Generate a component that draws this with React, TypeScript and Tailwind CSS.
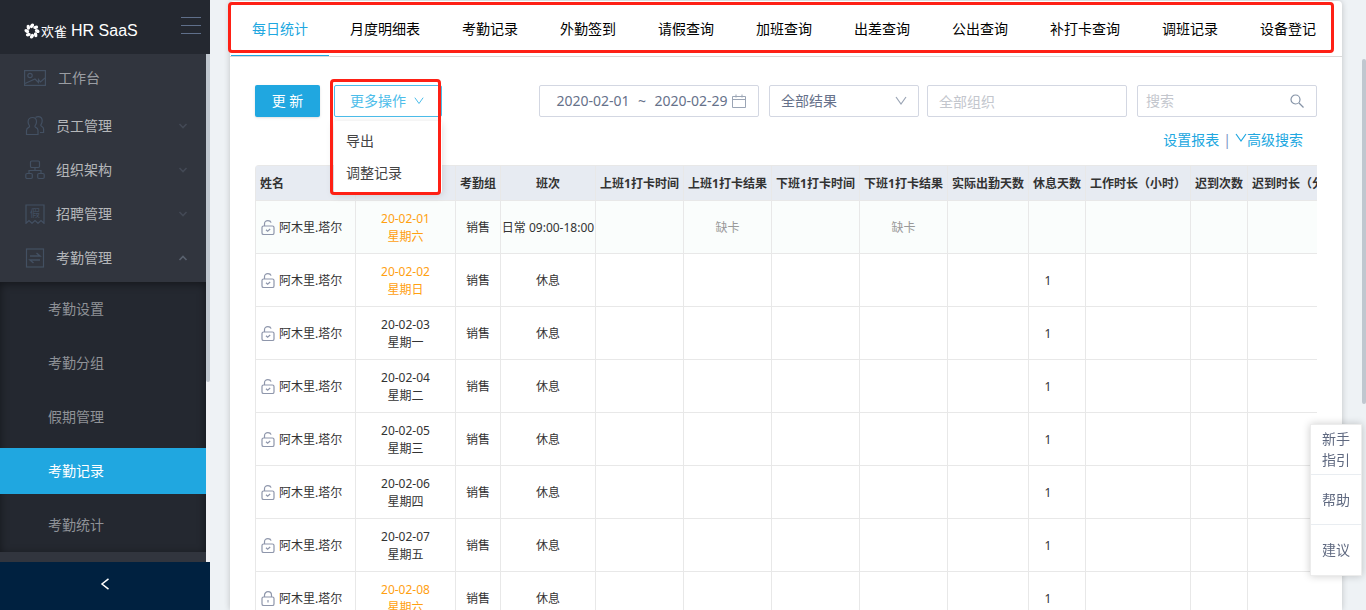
import React, { useState } from 'react';

const TABS = [
  '每日统计', '月度明细表', '考勤记录', '外勤签到', '请假查询', '加班查询',
  '出差查询', '公出查询', '补打卡查询', '调班记录', '设备登记',
];

const SUB_MENU = ['考勤设置', '考勤分组', '假期管理', '考勤记录', '考勤统计'];

const COLUMNS = [
  { title: '姓名', width: 'w-[100px]' },
  { title: '', width: 'w-[100px]' },
  { title: '考勤组', width: 'w-[45px]' },
  { title: '班次', width: 'w-[95px]' },
  { title: '上班1打卡时间', width: 'w-[88px]' },
  { title: '上班1打卡结果', width: 'w-[88px]' },
  { title: '下班1打卡时间', width: 'w-[88px]' },
  { title: '下班1打卡结果', width: 'w-[88px]' },
  { title: '实际出勤天数', width: 'w-[81px]' },
  { title: '休息天数', width: 'w-[57px]' },
  { title: '工作时长（小时）', width: 'w-[105px]' },
  { title: '迟到次数', width: 'w-[57px]' },
  { title: '迟到时长（分钟）', width: 'w-[105px]' },
];

interface DayRecord {
  date: string;
  week: string;
  weekend?: boolean;
  locked?: boolean;
  shift: string;
  result?: string;
  rest?: number;
}

const RECORDS: DayRecord[] = [
  { date: '20-02-01', week: '星期六', weekend: true, shift: '日常 09:00-18:00', result: '缺卡' },
  { date: '20-02-02', week: '星期日', weekend: true, shift: '休息', rest: 1 },
  { date: '20-02-03', week: '星期一', shift: '休息', rest: 1 },
  { date: '20-02-04', week: '星期二', shift: '休息', rest: 1 },
  { date: '20-02-05', week: '星期三', shift: '休息', rest: 1 },
  { date: '20-02-06', week: '星期四', shift: '休息', rest: 1 },
  { date: '20-02-07', week: '星期五', shift: '休息', rest: 1 },
  { date: '20-02-08', week: '星期六', weekend: true, locked: true, shift: '休息', rest: 1 },
];

function Chevron({ className }: { className: string }) {
  return (
    <svg viewBox="0 0 12 12" className={className} fill="none" stroke="currentColor" strokeWidth="1.2">
      <path d="M1 2l5 7 5-7" />
    </svg>
  );
}

function LockIcon({ locked }: { locked?: boolean }) {
  return (
    <svg viewBox="0 0 14 16" className="h-4 w-3.5 shrink-0 text-[#8e96ab]" fill="none" stroke="currentColor" strokeWidth="1.2">
      <rect x="1" y="6" width="12" height="8.500" rx="1.6" />
      {locked ? (
        <>
          <path d="M3.500 6V4.200a3.500 3.500 0 0 1 7 0V6" />
          <path d="M7 9v2.500" />
        </>
      ) : (
        <>
          <path d="M3.500 6V3.700c0-2 1.500-3.100 3.400-3.100 1.600 0 2.800.7 3.200 2" />
          <path d="M5 9.800l1.600 1.500L9.200 9" />
        </>
      )}
    </svg>
  );
}

function Logo() {
  return (
    <svg viewBox="0 0 16 16" className="h-4 w-4 shrink-0" fill="#fff">
      {[0, 45, 90, 135, 180, 225, 270, 315].map((deg) => (
        <ellipse key={deg} cx="8" cy="2.800" rx="1.7" ry="2.500" transform={`rotate(${deg} 8 8) rotate(35 8 2.800)`} />
      ))}
    </svg>
  );
}

const iconProps = {
  fill: 'none',
  stroke: 'currentColor',
  strokeWidth: 1.2,
  className: 'h-5 w-5 text-[#435062]',
  viewBox: '0 0 20 20',
};

const MENU = [
  {
    title: '员工管理',
    icon: (
      <svg {...iconProps}>
        <path d="M7.500 1.500c2.400 0 4 1.800 4 4.300 0 1.500-.6 2.800-1.300 3.700-.5.8-.2 1.500.6 1.900 1.400.7 2.200 1.600 2.200 3.100V18.500H1.500v-4c0-1.500.8-2.400 2.200-3.100.8-.4 1.100-1.100.6-1.900C3.600 8.600 3.100 7.300 3.100 5.800c0-2.500 2-4.300 4.400-4.300z" />
        <path d="M10.500 1.500c.7-.5 1.600-.9 2.700-.9 2.500 0 4 1.800 4 4.200 0 1.500-.5 2.700-1.100 3.600-.5.8-.2 1.400.5 1.800 1.300.7 2 1.600 2 2.900v3.400h-3.600" />
      </svg>
    ),
  },
  {
    title: '组织架构',
    icon: (
      <svg {...iconProps}>
        <rect x="5.500" y="1" width="9" height="6.500" rx="1.2" />
        <rect x=".8" y="13.500" width="6.500" height="5" rx="1.2" />
        <rect x="12.700" y="13.500" width="6.500" height="5" rx="1.2" />
        <path d="M10 7.500v3M4 13.500v-3h12v3" />
      </svg>
    ),
  },
  {
    title: '招聘管理',
    icon: (
      <svg {...iconProps}>
        <path d="M1 19.300V1h18v18.300l-3-2.800-3 2.800-3-2.800-3 2.800-3-2.800z" />
        <text x="10" y="13" textAnchor="middle" fontSize="10" fill="currentColor" stroke="none">假</text>
      </svg>
    ),
  },
  {
    title: '考勤管理',
    open: true,
    icon: (
      <svg {...iconProps}>
        <rect x="1.500" y="1" width="17" height="18" />
        <path d="M5 8h10l-3.500-3M15 12H5l3.500 3" strokeWidth="1.4" />
      </svg>
    ),
  },
];

function Sidebar() {
  return (
    <aside className="flex w-[210px] shrink-0 flex-col bg-[#31353e]">
      <div className="flex h-[54px] shrink-0 items-center bg-[#242830] pt-2 pr-[9px] pl-6 text-white">
        <Logo />
        <span className="ml-px text-[13px] leading-none">欢雀</span>
        <span className="ml-1 font-['Liberation_Sans',sans-serif] text-base leading-none whitespace-nowrap">HR SaaS</span>
        <button aria-label="菜单" className="mb-3 ml-auto text-[#5f6f8a]">
          <svg viewBox="0 0 20 18" className="h-[18px] w-5" stroke="currentColor">
            <path d="M0 1.500h20M0 9.500h20M0 17.500h20" />
          </svg>
        </button>
      </div>

      <div className="flex min-h-0 flex-1">
        <nav className="flex-1 overflow-hidden text-sm">
          <a href="#home" className="mb-0.5 flex h-12 items-center pl-6 text-[#9a9da2]">
            <svg viewBox="0 0 22 16" className="h-4 w-[22px] text-[#435062]" fill="none" stroke="currentColor" strokeWidth="1.2">
              <rect x=".6" y=".6" width="20.800" height="14.800" />
              <circle cx="6" cy="5.500" r="2.200" />
              <path d="M1 13.500l10-4.500 3.500 3.500v-3l2 2.500L21 8" />
            </svg>
            <span className="ml-3">工作台</span>
          </a>
          {MENU.map((item) => (
            <button key={item.title} className="flex h-11 w-full items-center pr-[18px] pl-[25px] text-[#b5b7ba]">
              {item.icon}
              <span className="ml-[11px]">{item.title}</span>
              <svg
                viewBox="0 0 10 8"
                className={`ml-auto h-2 w-[10px] ${item.open ? 'text-[#59616e]' : 'text-[#434955]'}`}
                fill="none"
                stroke="currentColor"
                strokeWidth="1.6"
              >
                <path d={item.open ? 'M1.500 6 5 2.500 8.500 6' : 'M1.500 2 5 5.500 8.500 2'} />
              </svg>
            </button>
          ))}
          <ul className="mt-0.5 space-y-2 bg-[#242830] pt-1 pb-1 shadow-[inset_0_2px_8px_rgba(0,0,0,0.45)]">
            {SUB_MENU.map((title) => (
              <li key={title}>
                <a
                  href={`#${title}`}
                  className={`flex h-[46px] items-center pl-12 ${title === '考勤记录' ? 'bg-[#20a7e0] text-white' : 'text-[#8f9297]'}`}
                >
                  {title}
                </a>
              </li>
            ))}
          </ul>
        </nav>
        <div className="w-1 bg-[#f1f2f5]">
          <div className="h-[328px] rounded-b-sm bg-[#c0c7cf]" />
        </div>
      </div>

      <button aria-label="收起" className="flex h-12 shrink-0 items-center justify-center bg-[#002140] pb-1 text-white">
        <svg viewBox="0 0 10 12" className="h-3 w-[10px]" fill="none" stroke="currentColor" strokeWidth="1.5">
          <path d="M8.500.8 2 6l6.500 5.200" />
        </svg>
      </button>
    </aside>
  );
}

function Toolbar() {
  const [menuOpen, setMenuOpen] = useState(true);

  return (
    <div className="flex h-8 items-center text-sm">
      <button className="h-8 w-[65px] rounded-xs bg-[#20a7e0] text-white shadow-sm">更 新</button>
      <div className="relative ml-[14px]">
        <button
          onClick={() => setMenuOpen(!menuOpen)}
          className="flex h-8 w-[108px] items-center rounded-xs border border-[#4cbdea] pl-[15px] text-[#4cbdea]"
        >
          更多操作
          <Chevron className="ml-2 h-[10px] w-[10px]" />
        </button>
        {menuOpen && (
          <ul className="absolute top-9 left-0 z-10 w-[108px] rounded-xs bg-white py-1 text-[#444] shadow-[0_2px_8px_rgba(0,0,0,0.15)]">
            <li><button className="h-8 px-3">导出</button></li>
            <li><button className="h-8 px-3">调整记录</button></li>
          </ul>
        )}
        {/* highlight frame */}
        <div className="pointer-events-none absolute -top-1.5 -left-1 z-20 h-[116px] w-[111px] rounded-sm border-3 border-[#fe2015]" />
      </div>

      <div className="ml-auto flex items-center text-[#66718a]">
        <div className="flex h-8 w-[220px] items-center rounded-xs border border-[#d3d7e2] px-3">
          <input aria-label="开始日期" defaultValue="2020-02-01" className="w-[82px] text-center outline-none" />
          <span className="w-4 text-center">~</span>
          <input aria-label="结束日期" defaultValue="2020-02-29" className="w-[82px] text-center outline-none" />
          <svg viewBox="0 0 14 14" className="h-[14px] w-[14px] shrink-0 text-[#9ba5b5]" fill="none" stroke="currentColor">
            <path d="M.5 2.500h13v11H.5zM.5 5.500h13M4 .5v3M10 .5v3" />
          </svg>
        </div>
        <div className="relative ml-[10px]">
          <select aria-label="考勤结果" className="h-8 w-[150px] appearance-none rounded-xs border border-[#d3d7e2] bg-white pl-[11px] outline-none">
            <option>全部结果</option>
          </select>
          <Chevron className="pointer-events-none absolute top-[10px] right-3 h-3 w-3 text-[#9ba5b5]" />
        </div>
        <input aria-label="组织" placeholder="全部组织" className="ml-2 h-8 w-[200px] rounded-xs border border-[#d3d7e2] px-[11px] outline-none placeholder:text-[#c3c6cd]" />
        <div className="ml-[10px] flex h-8 w-[180px] items-center rounded-xs border border-[#d3d7e2] px-2">
          <input aria-label="搜索" placeholder="搜索" className="w-full min-w-0 outline-none placeholder:text-[#c3c6cd]" />
          <svg viewBox="0 0 14 14" className="mr-1 h-[14px] w-[14px] shrink-0 text-[#8492a6]" fill="none" stroke="currentColor" strokeWidth="1.2">
            <circle cx="5.500" cy="5.500" r="4.500" />
            <path d="m9 9 4.500 4.500" />
          </svg>
        </div>
      </div>
    </div>
  );
}

function RecordTable() {
  return (
    <div className="overflow-x-hidden rounded-tl-sm">
      <table className="w-[1098px] table-fixed border-separate border-spacing-0 border-t border-l border-[#e8e8e8] text-xs leading-[18px] whitespace-nowrap text-[#333]">
        <thead>
          <tr className="h-[35px] bg-[#e7ebf2]">
            {COLUMNS.map((col, i) => (
              <th
                key={col.title}
                className={`${col.width} border-r border-b border-[#e8e8e8] px-1 pt-0.5 font-bold ${i === 0 ? 'text-left' : ''}`}
              >
                {col.title}
              </th>
            ))}
          </tr>
        </thead>
        <tbody>
          {RECORDS.map((rec, i) => {
            const cells = [
              '销售', rec.shift, '', rec.result, '', rec.result, '', rec.rest, '', '', '',
            ];
            return (
              <tr key={rec.date} className={`h-[53px] ${i === 0 ? 'bg-[#fafdfc]' : 'bg-white'}`}>
                <td className="border-r border-b border-[#e8e8e8] pt-0.5 pl-[5px]">
                  <div className="flex items-center gap-1">
                    <LockIcon locked={rec.locked} />
                    <span>阿木里.塔尔</span>
                  </div>
                </td>
                <td className={`border-r border-b border-[#e8e8e8] pt-0.5 text-center ${rec.weekend ? 'text-[#ffa011]' : ''}`}>
                  <div>{rec.date}</div>
                  <div>{rec.week}</div>
                </td>
                {cells.map((cell, j) => (
                  <td
                    key={j}
                    className={`border-r border-b border-[#e8e8e8] pt-0.5 text-center ${cell === '缺卡' ? 'text-[#999]' : ''} ${j === 7 ? 'pr-[18px]' : ''}`}
                  >
                    {cell}
                  </td>
                ))}
              </tr>
            );
          })}
        </tbody>
      </table>
    </div>
  );
}

export default function App() {
  return (
    <div className="flex h-screen overflow-hidden bg-[#eef2f5] font-['Noto_Sans','Noto_Sans_CJK_SC',sans-serif]">
      <Sidebar />

      <main className="flex min-w-0 flex-1 pl-5">
        <div className="relative mt-px min-w-0 flex-1 rounded-t-sm bg-white shadow-[0_0_6px_rgba(0,0,0,0.2)]">
          <nav className="flex h-14 border-b border-[#d9d9d9] px-px text-sm text-black">
            {TABS.map((tab, i) => (
              <a
                key={tab}
                href={`#${tab}`}
                className={`flex items-center border-b px-[21px] pt-0.5 whitespace-nowrap ${i === 0 ? 'border-[#20a7e0] text-[#20a7e0]' : 'border-transparent'}`}
              >
                {tab}
              </a>
            ))}
          </nav>
          <div className="pointer-events-none absolute top-px right-2 -left-0.5 h-[51px] rounded-sm border-3 border-[#fe2015]" />

          <div className="px-[25px] pt-7">
            <Toolbar />
            <div className="flex h-12 items-center justify-end pr-[14px] pb-0.5 text-sm text-[#20a7e0]">
              <a href="#report">设置报表</a>
              <span className="mx-1 text-[#7b93c4]">|</span>
              <a href="#advanced" className="flex items-center">
                <Chevron className="mb-1 h-3 w-3" />
                高级搜索
              </a>
            </div>
            <RecordTable />
          </div>
        </div>

        <div className="w-6 shrink-0 pt-[59px]">
          <div className="ml-auto h-[345px] w-1 rounded-full bg-[#c0c7cf]" />
        </div>
      </main>

      <div className="fixed right-1 bottom-[34px] z-30 w-[52px] divide-y divide-[#e9edf1] border border-[#ececec] bg-white text-sm leading-[21px] text-[#5f6980] shadow-[0_0_8px_rgba(0,0,0,0.2)]">
        <button className="block h-[50px] w-full px-2.5 pb-0.5">新手指引</button>
        <button className="block h-[50px] w-full">帮助</button>
        <button className="block h-[50px] w-full pb-0.5">建议</button>
      </div>
    </div>
  );
}
